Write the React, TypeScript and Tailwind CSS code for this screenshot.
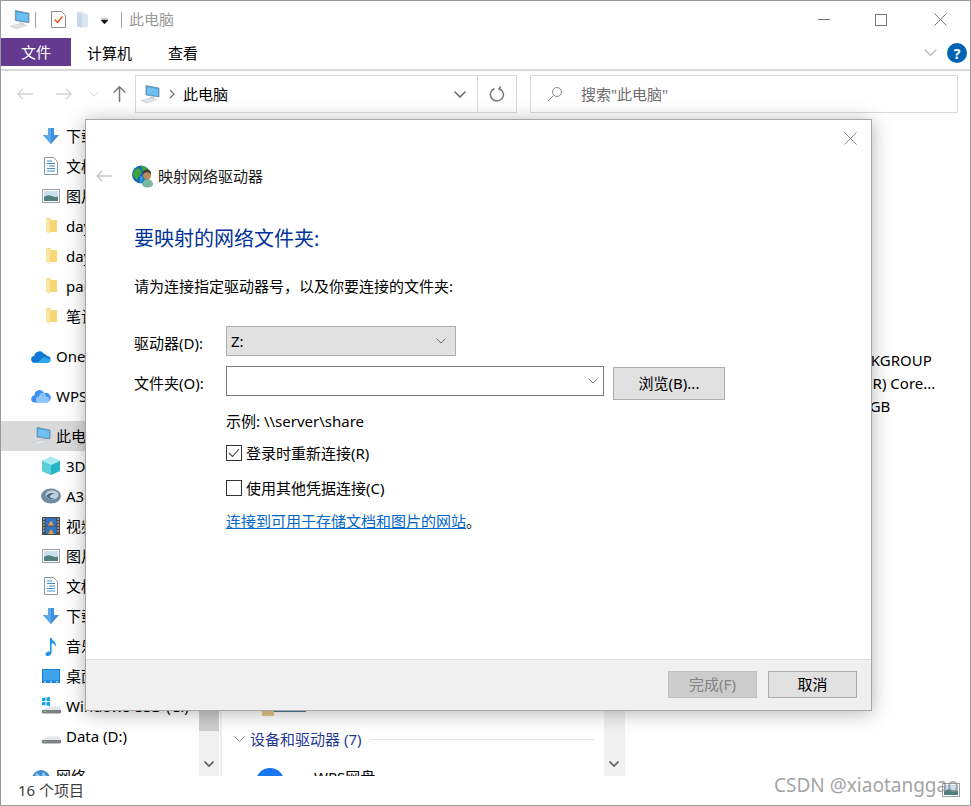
import type { ReactNode } from "react";

const Pc = ({ size = 20 }: { size?: number }) => (
  <svg width={size} height={size} viewBox="0 0 20 20">
    <path d="M6 1.500 19 4v9L6 11z" fill="#3f9fe0" stroke="#7d8f9c" strokeWidth="0.8" />
    <path d="M7 3 18 5v7L7 10.200z" fill="#6cc1f2" />
    <path d="M10 12.500 14 13v2l-4-.6z" fill="#c7ced4" />
    <path d="M1 16.500 10 14l7 1.500L7 19z" fill="#dfe3e6" stroke="#c2c7cb" strokeWidth="0.5" />
  </svg>
);

const Down = () => (
  <svg width="18" height="18" viewBox="0 0 18 18">
    <path d="M6 1h6v7h5l-8 9-8-9h5z" fill="#3d8fdc" />
    <path d="M6 1h3v16l-8-9h5z" fill="#5aa7ea" />
  </svg>
);

const Doc = () => (
  <svg width="16" height="18" viewBox="0 0 16 18">
    <path d="M1.500.5h9l4 4v13h-13z" fill="#fff" stroke="#8f979c" />
    <path d="M4 4h5M4 6.500h8M6 9h6M4 11.500h8M4 14h8" stroke="#3d8fd0" strokeWidth="1.200" />
  </svg>
);

const Pic = () => (
  <svg width="18" height="14" viewBox="0 0 18 14">
    <rect x="0.5" y="0.5" width="17" height="13" fill="#fff" stroke="#9aa0a5" />
    <rect x="2" y="2" width="14" height="10" fill="#c9dfee" />
    <path d="M2 8q4-3 8-1t6 0v5H2z" fill="#4f7f7e" />
  </svg>
);

const Folder = () => (
  <svg width="13" height="18" viewBox="0 0 13 18">
    <path d="M1 1h4l1 2h6v12H1z" fill="#f7d774" />
    <path d="M1 1l4 2v14l-4-2z" fill="#fbe7a2" />
  </svg>
);

const OneDrive = () => (
  <svg width="21" height="13" viewBox="0 0 21 13">
    <path d="M4 13a3.500 3.500 0 0 1-.6-7A5.500 5.500 0 0 1 13.500 3.500 4 4 0 0 1 17 6.100 3.400 3.400 0 0 1 17 13z" fill="#0f78d4" />
    <path d="M7 13 13 7l7 2.500c1 2-.5 3.500-3 3.500z" fill="#29a8ea" />
  </svg>
);

const WpsCloud = () => (
  <svg width="20" height="14" viewBox="0 0 20 14">
    <path d="M4 13.500a3.500 3.500 0 0 1-.5-7A5 5 0 0 1 13 4a4.800 4.800 0 0 1 3.500 9.500z" fill="#3d8ff0" />
    <path d="M8 13.500a3 3 0 0 1 0-6 3.500 3.500 0 0 1 7 0 3 3 0 0 1 1 6z" fill="#8cc5fa" />
  </svg>
);

const Cube = () => (
  <svg width="18" height="18" viewBox="0 0 18 18">
    <path d="M9 0l9 4v10l-9 4-9-4V4z" fill="#27b4c6" />
    <path d="M9 0l9 4-9 4-9-4z" fill="#a8ecf0" />
    <path d="M0 4l9 4v10l-9-4z" fill="#5ed0da" />
  </svg>
);

const Swirl = () => (
  <svg width="20" height="16" viewBox="0 0 20 16">
    <ellipse cx="10" cy="8" rx="10" ry="7.500" fill="#6f8a9e" />
    <ellipse cx="11" cy="7" rx="6.500" ry="4.500" fill="#c2d2dc" />
    <path d="M5 8q4-5 9-2-4-.5-5 2t5 2q-6 3-9-2z" fill="#4b6a80" />
  </svg>
);

const Video = () => (
  <svg width="18" height="18" viewBox="0 0 18 18">
    <rect width="18" height="18" fill="#4a4a48" />
    <rect x="3.500" y="1" width="11" height="7.500" fill="#2f73c6" />
    <rect x="3.500" y="9.500" width="11" height="7.500" fill="#2f73c6" />
    <path d="M6 8.500l3-5 3 5zM6 17l3-5 3 5z" fill="#e6a13a" />
    <path d="M1 2h1.500M1 5h1.500M1 8h1.500M1 11h1.500M1 14h1.500M15.500 2H17M15.500 5H17M15.500 8H17M15.500 11H17M15.500 14H17" stroke="#eee" />
  </svg>
);

const Music = () => (
  <svg width="14" height="19" viewBox="0 0 14 19">
    <path d="M6 1h1.600c.4 3 5.400 4 4.400 9-.6-2.500-2.500-3.500-4.400-4v9.500c0 2-2 3.500-4 3.500S1 17.500 2 16s3-2 4-1.300z" fill="#1d93e8" />
  </svg>
);

const Desk = () => (
  <svg width="18" height="14" viewBox="0 0 18 14">
    <rect width="18" height="14" fill="#1283d8" />
    <rect x="1" y="1" width="16" height="10.500" fill="#3ea4ec" />
    <path d="M2 13h2M8 13h2M14 13h2" stroke="#fff" />
  </svg>
);

const Drive = ({ win = false }: { win?: boolean }) => (
  <svg width="20" height="18" viewBox="0 0 20 18">
    {win && <path d="M1 1l3.500-.5V4H1zM5.500.4 9 0v4H5.500zM1 5h3.500v3.500L1 8zM5.500 5H9v4l-3.500-.4z" fill="#12a5ea" />}
    <path d="M1 13 7 9.500h12l1 3.500-2 3H2z" fill="#e3e5e6" />
    <path d="M1 13h19v2.500l-1 1H2l-1-1z" fill="#7d8184" />
    <rect x="3" y="14" width="2" height="1" fill="#5fe05f" />
  </svg>
);

const Globe = () => (
  <svg width="20" height="14" viewBox="0 0 20 14">
    <circle cx="10" cy="10" r="9" fill="#3f8fd0" />
    <path d="M5 4q4 1 4 4t-5 3zM12 3q4 3 3 7-3-1-4-4z" fill="#9fc8e8" />
  </svg>
);

const MapDriveIcon = () => (
  <svg width="22" height="23" viewBox="0 0 22 23">
    <circle cx="9" cy="9.500" r="9" fill="#1668b8" />
    <path d="M2 6q3-4 6-2t0 6-3 5-4-5zM9 1q5 0 7 3l-5 2z" fill="#3fa63c" />
    <path d="M8 11q3 0 3 3t-3 4z" fill="#2f9be0" />
    <ellipse cx="15.500" cy="19" rx="5.500" ry="3.500" fill="#6fb09a" />
    <path d="M11 21q-1-7 4.500-7t5 7z" fill="#78b8a0" />
    <circle cx="15" cy="10.500" r="4" fill="#b58a62" />
    <path d="M10.800 9.500q0-5 4.200-5t4.200 5q-2-2.500-4.200-2.500t-4.200 2.500z" fill="#4a3a30" />
  </svg>
);

type NavRow = { label: string; icon: ReactNode; sub?: boolean; gap?: boolean; active?: boolean };

const navRows: NavRow[] = [
  { label: "下载", icon: <Down />, sub: true },
  { label: "文档", icon: <Doc />, sub: true },
  { label: "图片", icon: <Pic />, sub: true },
  { label: "day01", icon: <Folder />, sub: true },
  { label: "day02", icon: <Folder />, sub: true },
  { label: "pandas", icon: <Folder />, sub: true },
  { label: "笔记", icon: <Folder />, sub: true },
  { label: "OneDrive", icon: <OneDrive />, gap: true },
  { label: "WPS网盘", icon: <WpsCloud />, gap: true },
  { label: "此电脑", icon: <Pc />, gap: true, active: true },
  { label: "3D 对象", icon: <Cube />, sub: true },
  { label: "A360 Drive", icon: <Swirl />, sub: true },
  { label: "视频", icon: <Video />, sub: true },
  { label: "图片", icon: <Pic />, sub: true },
  { label: "文档", icon: <Doc />, sub: true },
  { label: "下载", icon: <Down />, sub: true },
  { label: "音乐", icon: <Music />, sub: true },
  { label: "桌面", icon: <Desk />, sub: true },
  { label: "Windows-SSD (C:)", icon: <Drive win />, sub: true },
  { label: "Data (D:)", icon: <Drive />, sub: true },
  { label: "网络", icon: <Globe />, gap: true },
];

const Chevron = ({ w = 12, color = "#666", sw = 1 }: { w?: number; color?: string; sw?: number }) => (
  <svg width={w} height={w / 2 + 1} viewBox="0 0 12 7" fill="none">
    <path d="M.5.5 6 6 11.500.5" stroke={color} strokeWidth={sw} />
  </svg>
);

const Arrow = ({ color, flip = false }: { color: string; flip?: boolean }) => (
  <svg width="16" height="12" viewBox="0 0 16 12" fill="none" className={flip ? "rotate-180" : ""}>
    <path d="M6 .7.8 6 6 11.300M1 6h15" stroke={color} strokeWidth="1.300" />
  </svg>
);

function Scrollbar({ thumb }: { thumb: boolean }) {
  return (
    <div className="mt-2 flex w-5 shrink-0 flex-col bg-[#f0f0f0]">
      {thumb && <div className="h-[610px] shrink-0 bg-[#cdcdcd]" />}
      <div className="mt-auto flex h-[15px] items-start justify-center">
        <Chevron w={10} color="#606060" sw={2} />
      </div>
    </div>
  );
}

function Sidebar() {
  return (
    <div className="flex w-[219px] shrink-0 overflow-hidden">
      <div className="w-[198px] shrink-0 pt-2">
        {navRows.map((row, i) => (
          <div
            key={i}
            className={`flex h-[30px] items-center whitespace-nowrap ${row.gap ? "mt-[10px]" : ""} ${row.active ? "bg-[#d9d9d9]" : ""}`}
          >
            <div className={`flex w-5 shrink-0 justify-center ${row.sub ? "ml-[40px]" : "ml-[30px]"}`}>{row.icon}</div>
            <span className="ml-[5px]">{row.label}</span>
          </div>
        ))}
      </div>
      <Scrollbar thumb />
    </div>
  );
}

function FileArea() {
  return (
    <div className="flex min-w-0 flex-1 overflow-hidden">
      <div className="flex w-[384px] shrink-0 overflow-hidden">
        <div className="mt-2 w-[2px] shrink-0 bg-[#f0f0f0]" />
        <div className="min-w-0 flex-1 pt-[597px]">
          <div className="ml-10 flex h-[6px] items-start">
            <div className="h-[6px] w-3 bg-[#e5cc85]" />
            <div className="h-[2px] w-8 bg-[#4c7f9c]" />
          </div>
          <div className="mt-[11px] flex h-6 items-center pl-[12px] pr-[10px]">
            <Chevron w={11} color="#777" />
            <span className="ml-[5px] whitespace-nowrap text-[#1f3a93]">设备和驱动器 (7)</span>
            <div className="ml-[9px] h-px flex-1 bg-[#e5e5e5]" />
          </div>
          <div className="mt-[17px] flex items-start pl-[34px]">
            <div className="h-7 w-7 shrink-0 rounded-full bg-[#1677ee]" />
            <span className="ml-[30px] mt-[-2px] whitespace-nowrap">WPS网盘</span>
          </div>
        </div>
      </div>
      <Scrollbar thumb={false} />
      <div className="mt-2 w-px shrink-0 bg-[#eeeeee]" />
      <div className="flex-1 whitespace-nowrap pl-[211px] pt-[236px] leading-[23px]">
        <div>WORKGROUP</div>
        <div>Intel(R) Core...</div>
        <div>16.0 GB</div>
      </div>
    </div>
  );
}

function Explorer() {
  return (
    <div className="flex h-full flex-col">
      {/* 标题栏 */}
      <div className="flex h-[37px] shrink-0 items-center pl-[8px]">
        <Pc size={21} />
        <div className="ml-[5px] h-4 w-px bg-[#a0a0a0]" />
        <svg width="15" height="17" viewBox="0 0 15 17" className="ml-[15px]">
          <path d="M.5.5h10l4 4v12H.5z" fill="#fff" stroke="#8a8a8a" />
          <path d="M3.500 8.500 6.500 11.500 11.500 5.500" fill="none" stroke="#e8541c" strokeWidth="1.500" />
        </svg>
        <div className="ml-[10px]">
          <svg width="13" height="18" viewBox="0 0 13 18">
            <path d="M1 1h5l6 3v12H1z" fill="#dbe6f3" />
            <path d="M1 1l5 2v14l-5-2z" fill="#c6d8ec" />
          </svg>
        </div>
        <svg width="7" height="6" viewBox="0 0 7 6" className="ml-[12px] mt-[2px]">
          <path d="M0 0h7M0 2h7L3.500 6z" fill="#111" stroke="#111" strokeWidth="0.500" />
        </svg>
        <div className="ml-[13px] h-4 w-px bg-[#a0a0a0]" />
        <span className="ml-[7px] text-[#999999]">此电脑</span>
        <div className="ml-auto flex items-center">
          <div className="h-px w-3 bg-[#777]" />
          <div className="ml-[45px] h-3 w-3 border border-[#777]" />
          <svg width="13" height="13" viewBox="0 0 13 13" className="ml-[47px] mr-[23px]">
            <path d="M.5.500 12.500 12.500M12.500.500.5 12.500" stroke="#777" />
          </svg>
        </div>
      </div>

      {/* 功能区 */}
      <div className="flex h-[33px] shrink-0 items-start border-b-[2px] border-[#d9d9d9]">
        <div className="flex h-[28px] w-[70px] items-center justify-center bg-[#633a8f] text-white">文件</div>
        <span className="ml-[16px] mt-1">计算机</span>
        <span className="ml-[36px] mt-1">查看</span>
        <div className="ml-auto mr-[3px] mt-[5px] flex items-center">
          <Chevron w={13} color="#b0b0b0" />
          <div className="ml-[10px] flex h-5 w-5 items-center justify-center rounded-full bg-[#0063b1] text-[14px] font-bold text-white">?</div>
        </div>
      </div>

      {/* 地址栏 */}
      <div className="flex h-[42px] shrink-0 items-start pt-[4px]">
        <div className="flex h-[38px] w-[134px] items-center pl-[16px]">
          <Arrow color="#d4d4d4" />
          <div className="ml-[23px]"><Arrow color="#d4d4d4" flip /></div>
          <div className="ml-[18px]"><Chevron w={8} color="#d4d4d4" sw={1.500} /></div>
          <svg width="13" height="16" viewBox="0 0 13 16" fill="none" className="ml-[15px]">
            <path d="M.8 6.500 6.500.8l5.700 5.700M6.500 1v15" stroke="#777" strokeWidth="1.500" />
          </svg>
        </div>
        <div className="flex h-[38px] w-[382px] items-center border border-[#d9d9d9] pl-[4px]">
          <Pc size={20} />
          <svg width="6" height="10" viewBox="0 0 6 10" fill="none" className="ml-[9px]">
            <path d="M1 1l4 4-4 4" stroke="#777" strokeWidth="1.300" />
          </svg>
          <span className="ml-[8px]">此电脑</span>
          <div className="ml-auto flex h-full items-center">
            <Chevron w={12} color="#666" sw={1.500} />
            <div className="ml-[11px] h-full w-px bg-[#d9d9d9]" />
            <svg width="16" height="16" viewBox="0 0 16 16" fill="none" className="mx-[11px]">
              <path d="M5.500 2.500A6.500 6.500 0 1 0 11 2.800M11.800 .5 10 3l3 1.500" stroke="#777" strokeWidth="1.500" />
            </svg>
          </div>
        </div>
        <div className="ml-[13px] flex h-[38px] w-[428px] items-center border border-[#d9d9d9] pl-[16px] text-[#6d6d6d]">
          <svg width="16" height="16" viewBox="0 0 16 16" fill="none">
            <circle cx="10" cy="6" r="4.500" stroke="#888" />
            <path d="M6.500 9.500 1 15" stroke="#888" />
          </svg>
          <span className="ml-[18px]">搜索"此电脑"</span>
        </div>
      </div>

      {/* 主体 */}
      <div className="flex min-h-0 flex-1">
        <Sidebar />
        <FileArea />
      </div>

      {/* 状态栏 */}
      <div className="flex h-[29px] shrink-0 items-center pl-[17px] text-[#3c3c3c]">16 个项目</div>
    </div>
  );
}

function DialogButton({ children, disabled = false }: { children: ReactNode; disabled?: boolean }) {
  return (
    <div
      className={`flex h-[27px] w-[89px] items-center justify-center border ${
        disabled ? "border-[#bfbfbf] bg-[#cccccc] text-[#838383]" : "border-[#adadad] bg-[#e1e1e1]"
      }`}
    >
      {children}
    </div>
  );
}

function MapDriveDialog() {
  return (
    <div className="absolute left-[84px] top-[118px] flex h-[592px] w-[787px] flex-col border border-[#a6a6a6] bg-white shadow-[0_2px_18px_rgba(0,0,0,0.3)]">
      <div className="flex h-[32px] shrink-0 justify-end pr-[14px] pt-[12px]">
        <svg width="13" height="13" viewBox="0 0 13 13">
          <path d="M.5.500 12.500 12.500M12.500.500.5 12.500" stroke="#8a8a8a" />
        </svg>
      </div>
      <div className="flex h-[48px] shrink-0 items-center pl-[10px]">
        <Arrow color="#c4c4c4" />
        <div className="ml-[20px]"><MapDriveIcon /></div>
        <span className="ml-[4px] text-[#1a1a1a]">映射网络驱动器</span>
      </div>

      <div className="pl-[48px]">
        <div className="mt-[21px] flex h-[36px] items-center text-[20px] text-[#003399]">要映射的网络文件夹:</div>
        <div className="mt-[17px] flex h-6 items-center">请为连接指定驱动器号，以及你要连接的文件夹:</div>

        <div className="mt-[28px] flex items-center">
          <span className="w-[92px] shrink-0 pt-[5px]">驱动器(D):</span>
          <div className="flex h-[30px] w-[230px] items-center justify-between border border-[#adadad] bg-[#e1e1e1] pl-1 pr-[9px]">
            <span>Z:</span>
            <Chevron w={10} color="#555" />
          </div>
        </div>

        <div className="mt-[10px] flex items-start">
          <span className="flex h-[30px] w-[92px] shrink-0 items-center pt-[5px]">文件夹(O):</span>
          <div className="flex h-[30px] w-[378px] items-center justify-end border border-[#7a7a7a] pr-[5px]">
            <Chevron w={10} color="#555" />
          </div>
          <div className="ml-[9px] mt-px flex h-[33px] w-[112px] items-center justify-center border border-[#adadad] bg-[#e1e1e1]">浏览(B)...</div>
        </div>

        <div className="ml-[92px] mt-[10px] flex h-[22px] items-center">示例: \\server\share</div>

        <div className="ml-[92px] mt-[11px] flex h-5 items-center">
          <div className="flex h-4 w-4 items-center justify-center border border-[#333]">
            <svg width="12" height="10" viewBox="0 0 12 10" fill="none">
              <path d="M1 5l3.500 3.500L11 1" stroke="#444" strokeWidth="1.100" />
            </svg>
          </div>
          <span className="ml-1">登录时重新连接(R)</span>
        </div>

        <div className="ml-[92px] mt-[15px] flex h-5 items-center">
          <div className="h-4 w-4 border border-[#333]" />
          <span className="ml-1">使用其他凭据连接(C)</span>
        </div>

        <div className="ml-[92px] mt-[13px] flex h-5 items-center">
          <span className="text-[#0066cc] underline">连接到可用于存储文档和图片的网站</span>
          <span>。</span>
        </div>
      </div>

      <div className="mt-auto flex h-[51px] shrink-0 items-start justify-end gap-[11px] border-t border-[#dfdfdf] bg-[#f0f0f0] pr-[14px] pt-[11px]">
        <DialogButton disabled>完成(F)</DialogButton>
        <DialogButton>取消</DialogButton>
      </div>
    </div>
  );
}

export default function App() {
  return (
    <div
      className="relative h-[806px] w-[971px] overflow-hidden border border-[#9a9a9a] bg-white text-[15px] text-black"
      style={{ fontFamily: '"Noto Sans", "Noto Sans CJK SC", sans-serif' }}
    >
      <Explorer />
      <MapDriveDialog />
      {/* 水印 */}
      <div className="absolute bottom-[8px] right-[10px]">
        <Pic />
      </div>
      <div className="absolute bottom-[8px] left-[773px] whitespace-nowrap text-[19px] leading-6 text-[#8a8a8a]/80">CSDN @xiaotanggao</div>
    </div>
  );
}
